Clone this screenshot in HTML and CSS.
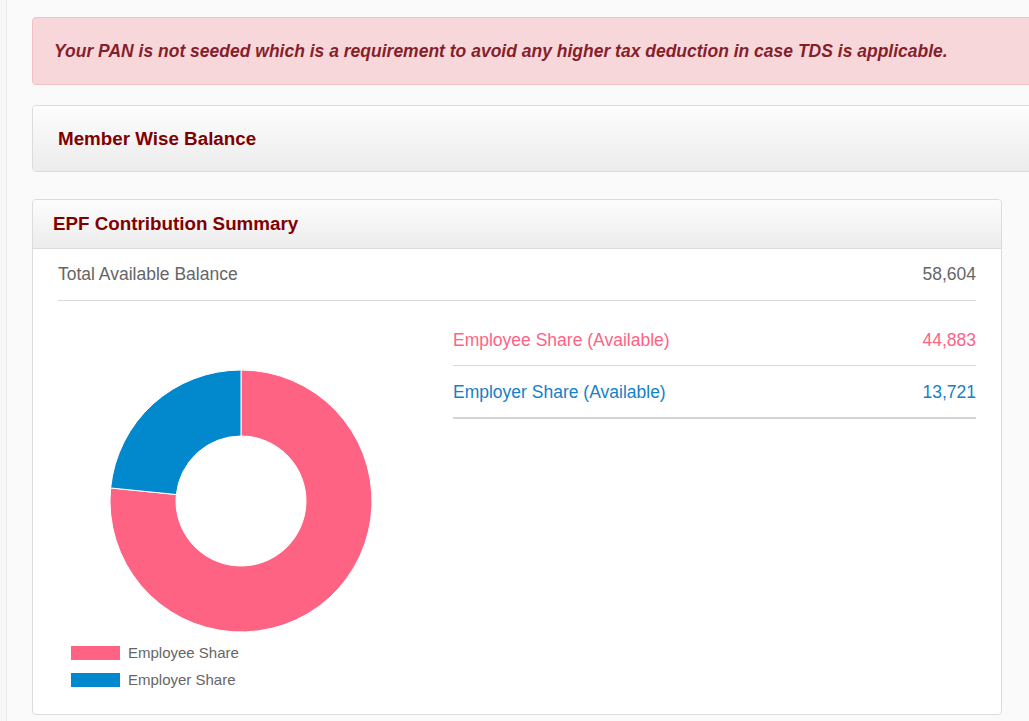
FILE: index.html
```html
<!DOCTYPE html>
<html>
<head>
<meta charset="utf-8">
<link rel="stylesheet" href="styles.css">
</head>
<body>
<div class="page">
  <div class="content">
    <div class="alert">Your PAN is not seeded which is a requirement to avoid any higher tax deduction in case TDS is applicable.</div>
    <div class="panel panel-wide">
      <div class="panel-heading tall"><h3 class="panel-title">Member Wise Balance</h3></div>
    </div>
    <div class="panel panel-epf">
      <div class="panel-heading"><h3 class="panel-title small-pad">EPF Contribution Summary</h3></div>
      <div class="panel-body">
        <div class="row total">
          <span>Total Available Balance</span>
          <span>58,604</span>
        </div>
        <div class="cols">
          <div class="chart-col">
            <svg class="donut" width="262" height="262" viewBox="0 0 262 262">
              <path fill="#ff6384" stroke="#fff" stroke-width="1" d="M131 0 A131 131 0 1 1 0.65 117.97 L66.32 124.53 A65 65 0 1 0 131 66 Z"/>
              <path fill="#0288cc" stroke="#fff" stroke-width="1" d="M0.65 117.97 A131 131 0 0 1 131 0 L131 66 A65 65 0 0 0 66.32 124.53 Z"/>
            </svg>
            <ul class="legend">
              <li><span class="swatch pink"></span>Employee Share</li>
              <li><span class="swatch blue"></span>Employer Share</li>
            </ul>
          </div>
          <div class="share-col">
            <div class="row share employee">
              <span>Employee Share (Available)</span>
              <span>44,883</span>
            </div>
            <div class="row share employer last">
              <span>Employer Share (Available)</span>
              <span>13,721</span>
            </div>
          </div>
        </div>
      </div>
    </div>
  </div>
</div>
</body>
</html>
```
FILE: styles.css
```css
html, body {
  margin: 0;
  padding: 0;
  height: 100%;
  overflow: hidden;
}
body {
  background: #f7f7f7;
  font-family: "Liberation Sans", Arial, sans-serif;
  color: #666;
}
.page {
  margin-left: 6px;
  border-left: 1px solid #e9e9e9;
  background: #fafafa;
  min-height: 100%;
  padding: 17px 0 0 25px;
  box-sizing: border-box;
}
.content {
  width: 1040px;
}
.alert {
  background: #f8d7da;
  border: 1px solid #f3c0c5;
  border-radius: 4px;
  height: 66px;
  box-sizing: content-box;
  display: flex;
  align-items: center;
  padding: 0 21px;
  font-size: 17.5px;
  font-weight: bold;
  font-style: italic;
  color: #861f2c;
  margin-bottom: 20px;
}
.panel {
  border: 1px solid #dcdcdc;
  border-radius: 4px;
  background: #fff;
}
.panel-wide {
  margin-bottom: 27px;
}
.panel-heading {
  background: linear-gradient(#fdfdfd, #ececec);
  height: 48px;
  display: flex;
  align-items: center;
  border-bottom: 1px solid #dcdcdc;
  border-radius: 4px 4px 0 0;
}
.panel-heading.tall {
  height: 65px;
  border-bottom: none;
  border-radius: 4px;
}
.panel-title {
  margin: 0;
  padding-left: 25px;
  font-size: 18.8px;
  font-weight: bold;
  color: #800000;
}
.panel-title.small-pad {
  padding-left: 20px;
}
.panel-epf {
  width: 968px;
}
.panel-body {
  padding: 0 25px 27px 25px;
}
.row {
  display: flex;
  justify-content: space-between;
  font-size: 17.5px;
  line-height: 26px;
  border-bottom: 1px solid #dadada;
}
.row.total {
  padding: 12px 0 13px;
  color: #666;
}
.cols {
  display: grid;
  grid-template-columns: 365px 1fr;
  column-gap: 30px;
}
.chart-col {
  padding-top: 69px;
  display: flex;
  flex-direction: column;
}
.donut {
  display: block;
  align-self: center;
}
.legend {
  list-style: none;
  margin: 14px 0 0 13px;
  padding: 0;
  font-size: 15px;
  color: #666;
}
.legend li {
  display: flex;
  align-items: center;
  height: 14px;
  margin-bottom: 13px;
  line-height: 14px;
}
.legend li:last-child {
  margin-bottom: 0;
}
.swatch {
  display: inline-block;
  width: 49px;
  height: 14px;
  margin-right: 8px;
}
.swatch.pink { background: #ff6384; }
.swatch.blue { background: #0288cc; }
.share-col {
  padding-top: 13px;
}
.row.share {
  padding: 13px 0 12px;
}
.row.employee {
  color: #ff6384;
}
.row.employer {
  color: #1581c6;
}
.row.last {
  border-bottom: 2px solid #d4d4d4;
}
```
